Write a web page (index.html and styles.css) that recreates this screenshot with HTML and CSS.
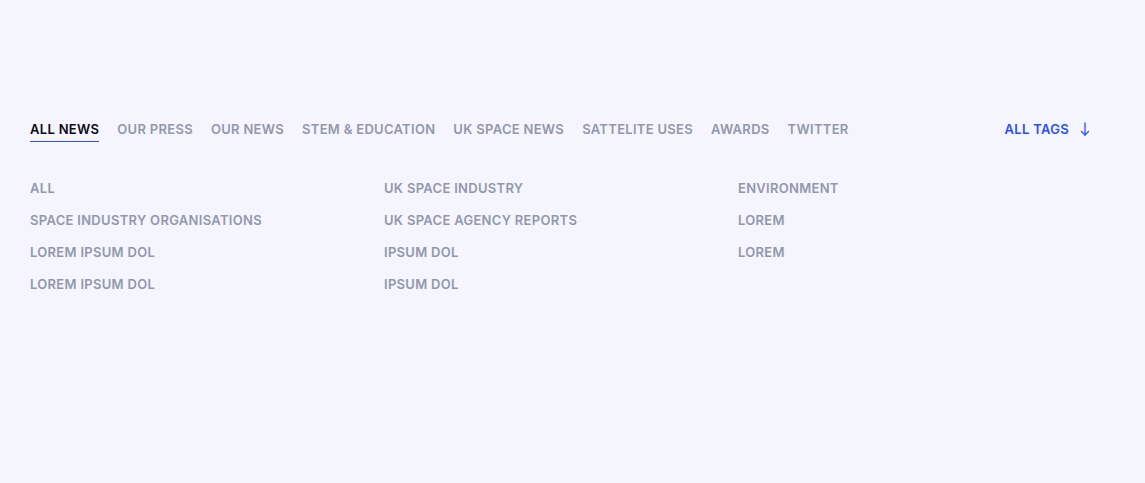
FILE: index.html
```html
<!DOCTYPE html>
<html lang="en">
<head>
<meta charset="utf-8">
<title>News tags</title>
<link rel="stylesheet" href="styles.css">
</head>
<body>
<section class="news-filter">
  <nav class="tabs">
    <ul class="tab-list">
      <li class="tab active">ALL NEWS</li>
      <li class="tab">OUR PRESS</li>
      <li class="tab">OUR NEWS</li>
      <li class="tab">STEM &amp; EDUCATION</li>
      <li class="tab">UK SPACE NEWS</li>
      <li class="tab">SATTELITE USES</li>
      <li class="tab">AWARDS</li>
      <li class="tab">TWITTER</li>
    </ul>
    <button class="all-tags">ALL TAGS
      <svg class="arrow" width="10" height="14" viewBox="0 0 10 14" fill="none" stroke="currentColor" stroke-width="1.3" stroke-linecap="round" stroke-linejoin="round"><path d="M5 1V13"/><path d="M1.5 9.5L5 13L8.5 9.5"/></svg>
    </button>
  </nav>
  <div class="tag-grid">
    <ul class="tag-col">
      <li>ALL</li>
      <li>SPACE INDUSTRY ORGANISATIONS</li>
      <li>LOREM IPSUM DOL</li>
      <li>LOREM IPSUM DOL</li>
    </ul>
    <ul class="tag-col">
      <li>UK SPACE INDUSTRY</li>
      <li>UK SPACE AGENCY REPORTS</li>
      <li>IPSUM DOL</li>
      <li>IPSUM DOL</li>
    </ul>
    <ul class="tag-col">
      <li>ENVIRONMENT</li>
      <li>LOREM</li>
      <li>LOREM</li>
    </ul>
  </div>
</section>
</body>
</html>
```
FILE: styles.css
```css
* { box-sizing: border-box; }
html, body { margin: 0; padding: 0; }
body {
  background: #f4f5fe;
  font-family: Inter, "Liberation Sans", sans-serif;
  font-weight: 600;
  font-size: 13px;
  letter-spacing: 0.3px;
  color: #9298ab;
  height: 483px;
}
ul { list-style: none; margin: 0; padding: 0; }
.news-filter {
  padding: 119px 55px 0 30px;
}
.tabs {
  display: flex;
  justify-content: space-between;
  align-items: flex-start;
}
.tab-list {
  display: flex;
  gap: 18px;
}
.tab {
  line-height: 20px;
  padding-bottom: 2px;
  border-bottom: 1px solid transparent;
}
.tab.active {
  color: #0b0c14;
  border-bottom-color: #2c50f0;
}
.all-tags {
  display: flex;
  align-items: center;
  gap: 11px;
  background: none;
  border: 0;
  padding: 0;
  font: inherit;
  letter-spacing: inherit;
  color: #2c50f0;
  line-height: 20px;
}
.tag-grid {
  display: grid;
  grid-template-columns: 354px 354px 354px;
  margin-top: 36px;
}
.tag-col li {
  line-height: 20px;
  margin-bottom: 12px;
}
```
